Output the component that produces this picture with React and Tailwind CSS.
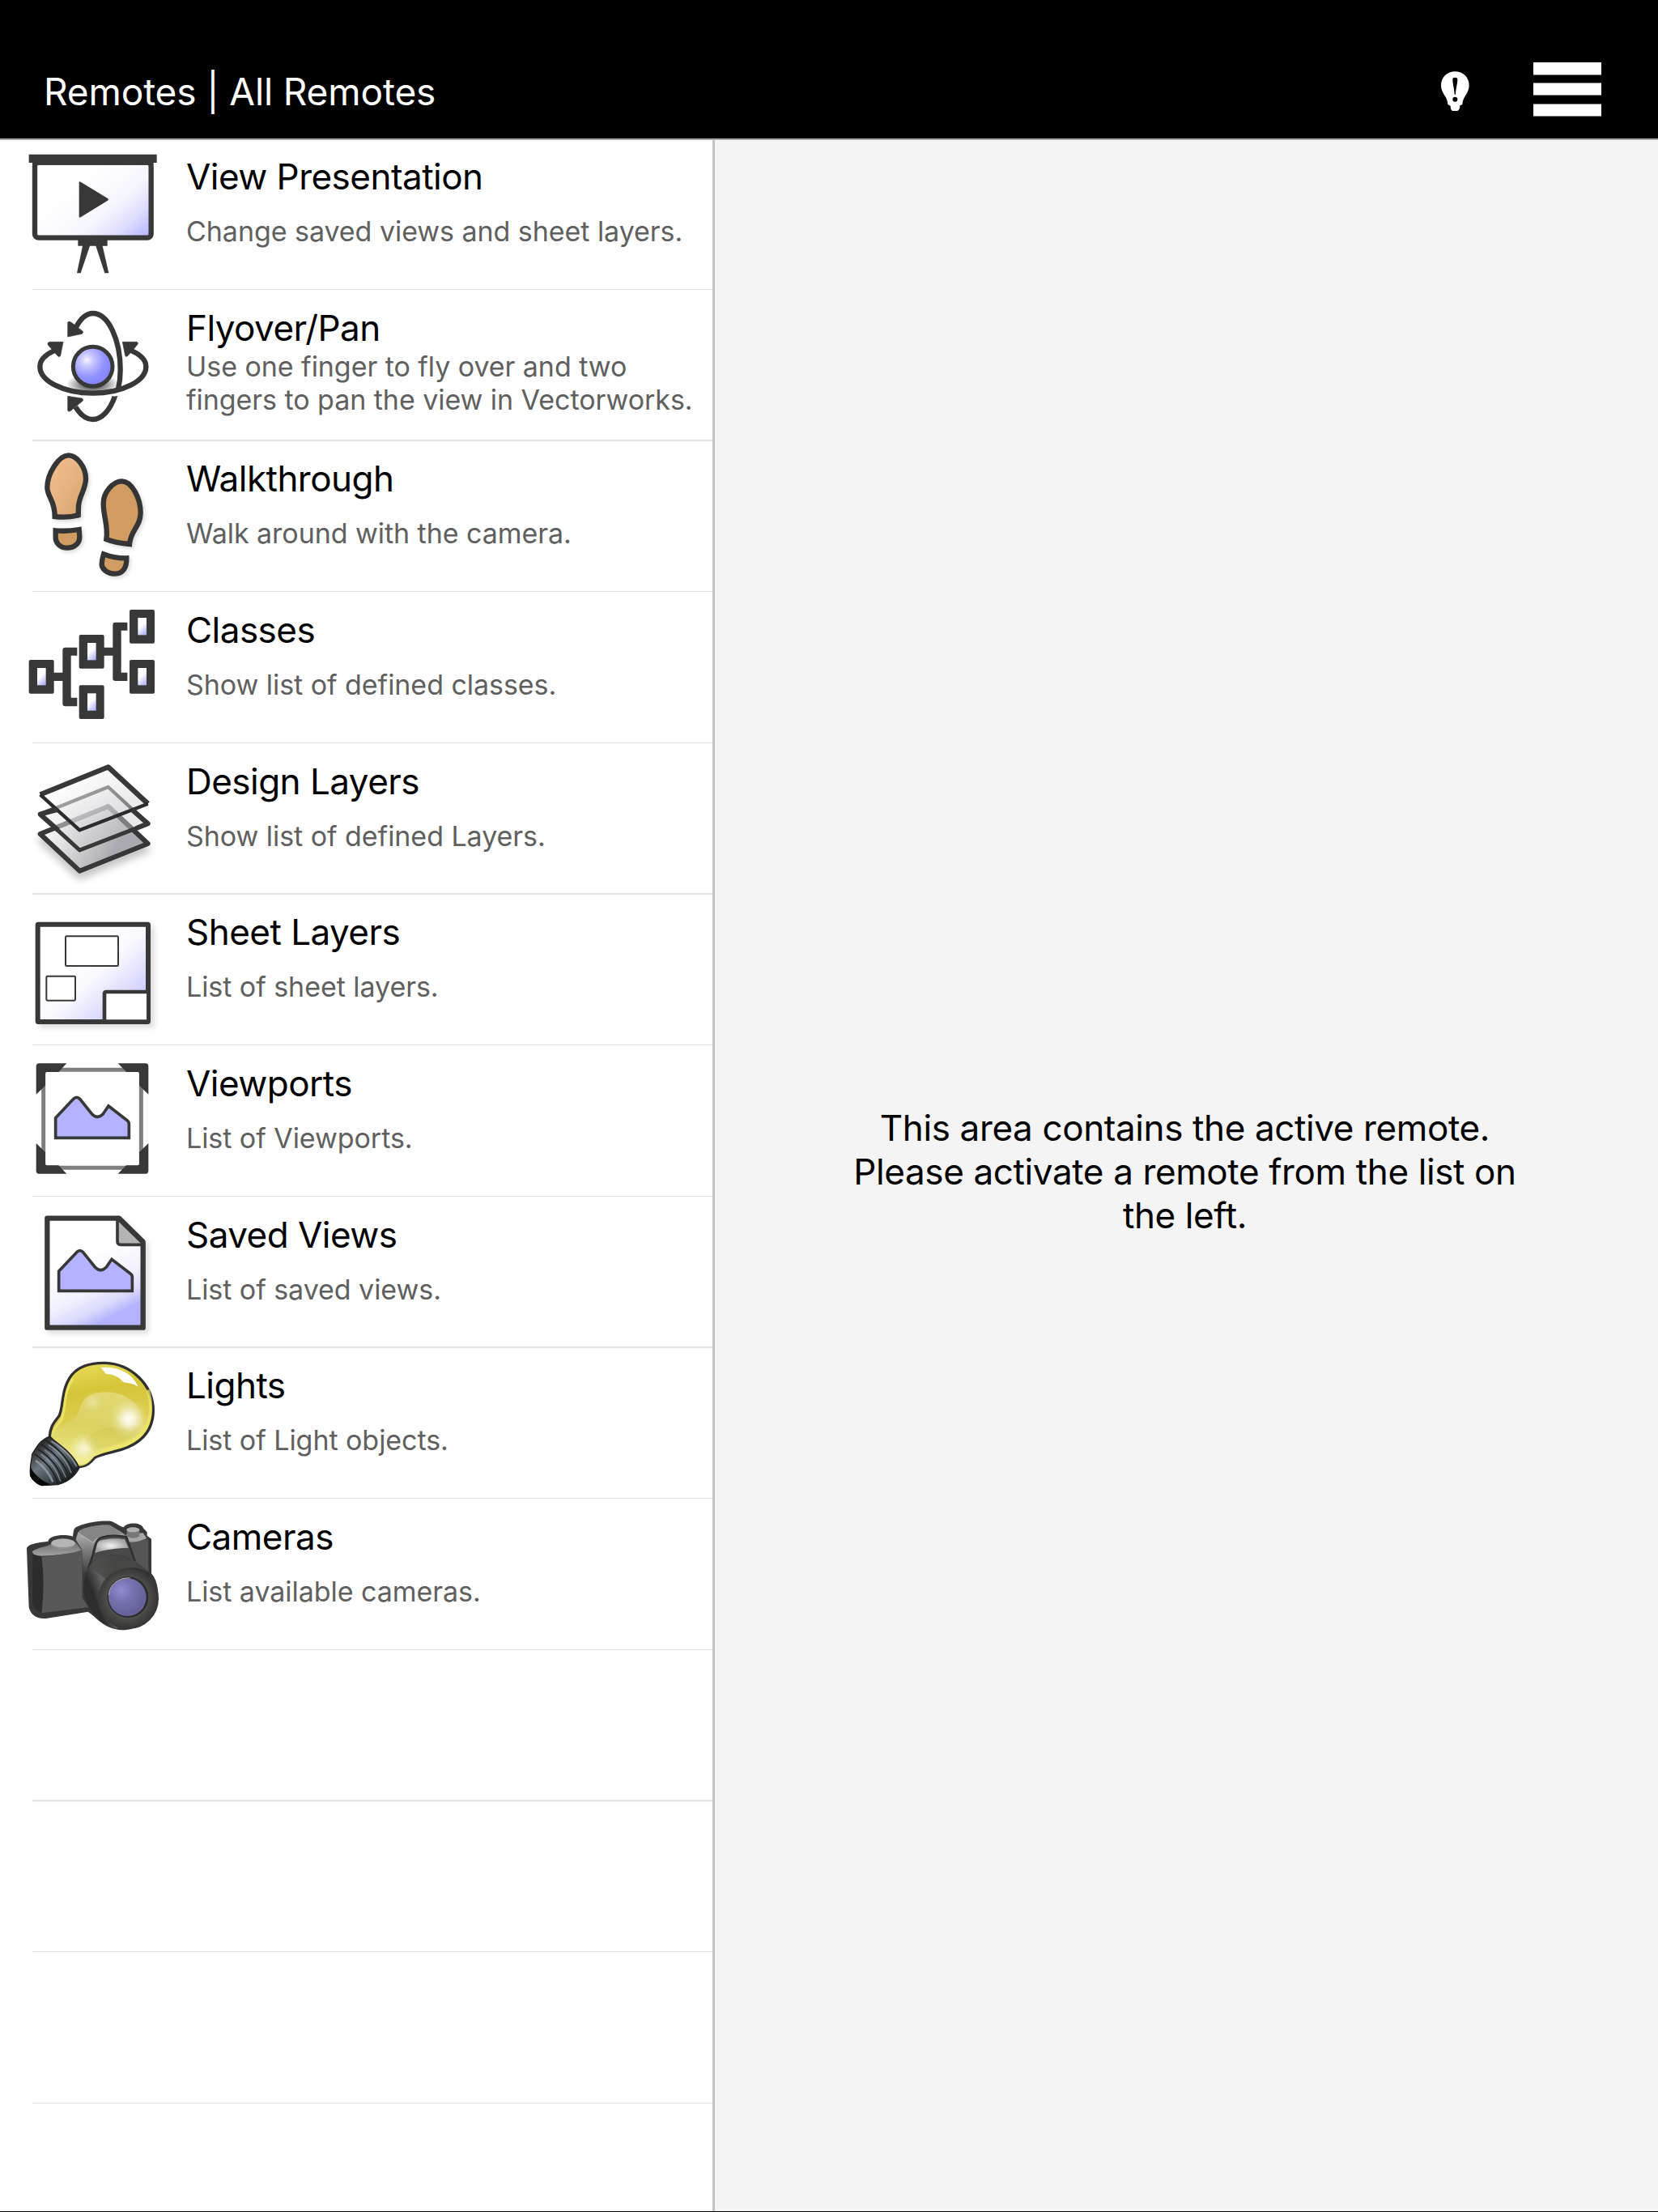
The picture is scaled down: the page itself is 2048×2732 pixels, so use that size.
import React from 'react';

const INK = '#383838';

function PresentationIcon() {
  return (
    <svg viewBox="0 39 660 549" className="w-[220px] h-[183px] shrink-0">
      <defs>
        <linearGradient id="screen" gradientUnits="userSpaceOnUse" x1="300" y1="190" x2="515" y2="440">
          <stop offset="0" stopColor="#fff" />
          <stop offset="0.45" stopColor="#f6f6ff" />
          <stop offset="0.7" stopColor="#dedeff" />
          <stop offset="1" stopColor="#b0b0ff" />
        </linearGradient>
      </defs>
      <rect x="129" y="122" width="431" height="279" rx="14" fill="url(#screen)" stroke={INK} strokeWidth="19" />
      <path d="M107 92H581V123H569V131H120V123H107Z" fill={INK} />
      <path d="M293 197Q293 190 299 194L399 255Q404 259 399 263L299 325Q293 328 293 321Z" fill={INK} />
      <path d="M289 408H398V431H380L403 532H388L355 431H333L299 532H285L306 431H289Z" fill={INK} />
    </svg>
  );
}

function FlyoverIcon() {
  return (
    <svg viewBox="0 594 660 549" className="w-[220px] h-[183px] shrink-0">
      <defs>
        <radialGradient id="ball" gradientUnits="userSpaceOnUse" cx="322" cy="854" r="92">
          <stop offset="0" stopColor="#f6f6ff" />
          <stop offset="0.25" stopColor="#c8c8ff" />
          <stop offset="0.7" stopColor="#9292ff" />
          <stop offset="1" stopColor="#8686ff" />
        </radialGradient>
        <radialGradient id="ballShade">
          <stop offset="0" stopColor="#000" stopOpacity="0.9" />
          <stop offset="0.6" stopColor="#000" stopOpacity="0.35" />
          <stop offset="1" stopColor="#000" stopOpacity="0" />
        </radialGradient>
      </defs>
      <ellipse cx="343" cy="945" rx="98" ry="42" fill="url(#ballShade)" />
      <g fill="none" stroke={INK} strokeWidth="19">
        <path d="M425 990C405 1046 374 1074 344 1074C319 1074 297 1056 280 1028" />
        <path d="M282 732C297 704 319 681 344 681C402 681 446 780 446 890C446 918 443 940 438 962" />
        <path d="M204 818C168 834 148 856 148 878C148 932 236 977 344 977C452 977 541 932 541 878C541 856 521 834 484 818" />
      </g>
      <g fill={INK} stroke={INK} strokeWidth="2" strokeLinejoin="round">
        <path d="M251 768V718Q251 709 259 712Q272 720 282 728Q294 738 305 746Q311 751 304 757Z" />
        <path d="M234 787L224 838Q221 845 214 839L178 798Q174 791 183 787Z" />
        <path d="M454 787H507Q514 790 509 797L474 838Q466 845 464 837Z" />
        <path d="M251 988L303 996Q312 1000 306 1006L262 1042Q252 1048 251 1039Z" />
        <path d="M417 991L436 986L426 1010L410 1010Z" stroke="none" />
      </g>
      <circle cx="344" cy="878" r="73" fill="url(#ball)" stroke={INK} strokeWidth="15" />
    </svg>
  );
}

function WalkthroughIcon() {
  return (
    <svg viewBox="0 15 660 549" className="w-[220px] h-[183px] shrink-0">
      <defs>
        <linearGradient id="sole" x1="0" y1="0" x2="1" y2="1">
          <stop offset="0" stopColor="#f0bd8d" />
          <stop offset="0.45" stopColor="#e9b583" />
          <stop offset="1" stopColor="#d3a067" />
        </linearGradient>
        <filter id="soleShadow" x="-20%" y="-20%" width="150%" height="150%">
          <feDropShadow dx="7" dy="8" stdDeviation="6" floodOpacity="0.13" />
        </filter>
      </defs>
      <g stroke="#343434" strokeWidth="19" filter="url(#soleShadow)">
        <path d="M254 67C284 67 318 110 318 154C318 193 293 217 291 256L290 289Q248 300 203 294C203 264 197 246 188 228C180 212 175 201 175 186C175 135 218 67 254 67Z" fill="url(#sole)" />
        <path d="M206 346Q250 350 293 342L295 368C296 394 275 410 249 410C224 410 206 394 206 370Z" fill="#d09c62" />
        <path d="M452 163C488 163 521 226 521 280C521 331 483 346 480 396Q430 392 394 378C402 330 383 295 383 245C383 204 419 163 452 163Z" fill="#d09c62" />
        <path d="M384 433Q425 449 469 448C470 482 456 506 427 506C396 506 376 486 377 470Q378 452 384 433Z" fill="#d09c62" />
      </g>
    </svg>
  );
}

const CLASS_BOXES = [[107, 826], [293, 733], [293, 920], [480, 640], [480, 826]];

function ClassesIcon() {
  return (
    <svg viewBox="0 574 660 549" className="w-[220px] h-[183px] shrink-0">
      <defs>
        <linearGradient id="cell" x1="0.2" y1="0" x2="0.7" y2="1">
          <stop offset="0.45" stopColor="#fff" />
          <stop offset="1" stopColor="#b4b4fb" />
        </linearGradient>
      </defs>
      {CLASS_BOXES.map(([x, y]) => (
        <g key={`${x}-${y}`}>
          <rect x={x} y={y} width="93" height="125" rx="6" fill={INK} />
          <rect x={x + 31} y={y + 30} width="32" height="64" fill="url(#cell)" />
        </g>
      ))}
      <path d="M198 873H232V789Q232 780 241 780H286V810H263V966H286V998H241Q232 998 232 989V904H198Z" fill={INK} />
      <path d="M384 780H418V696Q418 687 427 687H472V717H449V873H472V904H427Q418 904 418 895V810H384Z" fill={INK} />
    </svg>
  );
}

function DesignLayersIcon() {
  return (
    <svg viewBox="0 -6 660 549" className="w-[220px] h-[183px] shrink-0">
      <defs>
        <linearGradient id="sheet" gradientUnits="userSpaceOnUse" x1="270" y1="110" x2="400" y2="310">
          <stop offset="0" stopColor="#fff" stopOpacity="0.6" />
          <stop offset="1" stopColor="#cfcfd4" stopOpacity="0.45" />
        </linearGradient>
        <linearGradient id="sheetBottom" gradientUnits="userSpaceOnUse" x1="210" y1="280" x2="420" y2="400">
          <stop offset="0" stopColor="#f4f4f4" />
          <stop offset="1" stopColor="#aaaab0" />
        </linearGradient>
        <filter id="layerShadow" x="-20%" y="-20%" width="150%" height="160%">
          <feDropShadow dx="0" dy="24" stdDeviation="15" floodOpacity="0.22" />
        </filter>
      </defs>
      <g stroke={INK} strokeLinejoin="round">
        <path d="M401 228L548 366L295 467L149 330Z" fill="url(#sheetBottom)" strokeWidth="18" filter="url(#layerShadow)" />
        <path d="M401 156L548 292L295 390L149 257Z" fill="url(#sheet)" stroke="none" />
        <path d="M205 235L401 156L492 240" fill="none" strokeWidth="13" />
        <path d="M205 235L149 257L295 390L548 292L492 240" fill="none" strokeWidth="15" />
        <path d="M401 82L548 218L295 316L149 184Z" fill="url(#sheet)" stroke="none" />
        <path d="M149 184L401 82L548 218" fill="none" strokeWidth="19" />
        <path d="M149 184L295 316L548 218" fill="none" strokeWidth="13" stroke="#2c2c2e" />
        <path d="M212 240L149 257L215 316M490 241L548 292L505 309" fill="none" strokeWidth="18" />
      </g>
    </svg>
  );
}

function SheetLayersIcon() {
  return (
    <svg viewBox="0 555 660 549" className="w-[220px] h-[183px] shrink-0">
      <defs>
        <linearGradient id="plan" gradientUnits="userSpaceOnUse" x1="270" y1="770" x2="480" y2="1000">
          <stop offset="0" stopColor="#fff" />
          <stop offset="0.4" stopColor="#f8f8ff" />
          <stop offset="1" stopColor="#c8c8ff" />
        </linearGradient>
        <filter id="planShadow" x="-10%" y="-10%" width="130%" height="130%">
          <feDropShadow dx="14" dy="14" stdDeviation="9" floodOpacity="0.13" />
        </filter>
      </defs>
      <rect x="140" y="665" width="409" height="361" rx="2" fill="url(#plan)" stroke={INK} strokeWidth="18" strokeLinejoin="round" filter="url(#planShadow)" />
      <path d="M387 1020V922Q387 915 394 915H543V1018H387" fill="#fff" />
      <path d="M387 1022V922Q387 915 394 915H545" fill="none" stroke={INK} strokeWidth="14" />
      <rect x="243" y="709" width="195" height="110" rx="4" fill="#fff" stroke={INK} strokeWidth="6" />
      <rect x="172" y="857" width="107" height="90" rx="4" fill="#fff" stroke={INK} strokeWidth="6" />
    </svg>
  );
}

function ViewportsIcon() {
  return (
    <svg viewBox="0 2 660 549" className="w-[220px] h-[183px] shrink-0">
      <rect x="161" y="93" width="362" height="363" rx="6" fill="#fff" stroke="#808080" strokeWidth="15" />
      <g fill={INK}>
        <path d="M145 69H247L217 101H174Q168 101 168 107V151L134 184V80Q134 69 145 69Z" />
        <path d="M437 69H539Q550 69 550 80V184L516 151V107Q516 101 510 101H468Z" />
        <path d="M134 365L168 398V441Q168 447 174 447H217L247 478H145Q134 478 134 467Z" />
        <path d="M550 365L516 398V441Q516 447 510 447H468L437 478H539Q550 478 550 467Z" />
      </g>
      <path d="M206 345V271L272 201Q284 189 296 201L340 256Q361 278 382 256L402 227L471 280Q478 285 478 294V345Z" fill="#b3b3ff" stroke={INK} strokeWidth="11" />
    </svg>
  );
}

function SavedViewsIcon() {
  return (
    <svg viewBox="0 563 660 549" className="w-[220px] h-[183px] shrink-0">
      <defs>
        <linearGradient id="page" gradientUnits="userSpaceOnUse" x1="320" y1="780" x2="430" y2="1000">
          <stop offset="0" stopColor="#fff" />
          <stop offset="0.5" stopColor="#f2f2ff" />
          <stop offset="0.8" stopColor="#d9d9ff" />
          <stop offset="1" stopColor="#b3b3ff" />
        </linearGradient>
        <filter id="pageShadow" x="-10%" y="-10%" width="130%" height="130%">
          <feDropShadow dx="12" dy="13" stdDeviation="9" floodOpacity="0.13" />
        </filter>
      </defs>
      <path d="M175 643H441L530 731V1048H175Z" fill="url(#page)" stroke={INK} strokeWidth="19" strokeLinejoin="round" filter="url(#pageShadow)" />
      <path d="M435 650V728Q435 741 448 741H525Z" fill="#b3b3b3" />
      <path d="M435 648V728Q435 741 448 741H525" fill="none" stroke={INK} strokeWidth="11" />
      <path d="M441 643L530 731" stroke={INK} strokeWidth="19" />
      <path d="M218 912V839L284 769Q296 757 308 769L352 824Q373 846 394 824L414 795L483 848Q490 853 490 861V912Z" fill="#b3b3ff" stroke={INK} strokeWidth="11" />
    </svg>
  );
}

function LightsIcon() {
  return (
    <svg viewBox="0 15 660 549" className="w-[220px] h-[183px] shrink-0">
      <defs>
        <linearGradient id="glass" gradientUnits="userSpaceOnUse" x1="330" y1="70" x2="390" y2="430">
          <stop offset="0" stopColor="#e6db55" />
          <stop offset="0.28" stopColor="#d6c438" />
          <stop offset="0.65" stopColor="#ddd054" />
          <stop offset="1" stopColor="#efe97a" />
        </linearGradient>
        <linearGradient id="innerGlass" gradientUnits="userSpaceOnUse" x1="370" y1="180" x2="340" y2="440">
          <stop offset="0" stopColor="#e6de84" stopOpacity="0.75" />
          <stop offset="0.5" stopColor="#dbd164" stopOpacity="0.8" />
          <stop offset="1" stopColor="#f1ec8c" stopOpacity="0.9" />
        </linearGradient>
        <linearGradient id="cap" gradientUnits="userSpaceOnUse" x1="150" y1="370" x2="250" y2="500">
          <stop offset="0" stopColor="#2a2d2e" />
          <stop offset="0.4" stopColor="#6c777f" />
          <stop offset="0.65" stopColor="#4c575e" />
          <stop offset="1" stopColor="#1c2022" />
        </linearGradient>
        <radialGradient id="glow">
          <stop offset="0" stopColor="#fff" stopOpacity="0.95" />
          <stop offset="0.3" stopColor="#fff" stopOpacity="0.7" />
          <stop offset="0.65" stopColor="#fff" stopOpacity="0.22" />
          <stop offset="1" stopColor="#fff" stopOpacity="0" />
        </radialGradient>
      </defs>
      <path d="M184 345C186 305 200 291 218 268C237 234 223 171 266 114C299 75 350 69 390 70C485 73 567 150 568 245C568 310 535 355 475 382C432 402 384 401 350 422C335 440 320 454 290 455Z" fill="url(#glass)" stroke="#303030" strokeWidth="10" />
      <path d="M194 342C197 316 212 302 227 280C246 240 233 180 270 128" fill="none" stroke="#eee870" strokeWidth="9" opacity="0.8" />
      <path d="M548 170C568 235 558 298 520 337C475 382 390 388 345 412C328 436 314 447 290 447" fill="none" stroke="#efe866" strokeWidth="12" opacity="0.7" />
      <path d="M190 340C220 290 278 302 296 240C310 192 345 178 396 178C465 180 526 220 527 290C524 350 462 366 400 386C340 404 345 442 290 446Z" fill="url(#innerGlass)" />
      <path d="M315 360C345 315 400 302 450 312C490 308 510 305 520 298C500 365 410 372 345 398Z" fill="#c6ba3c" opacity="0.25" />
      <circle cx="478" cy="278" r="74" fill="url(#glow)" />
      <circle cx="310" cy="386" r="56" fill="url(#glow)" opacity="0.7" />
      <circle cx="343" cy="215" r="42" fill="url(#glow)" opacity="0.3" />
      <path d="M374 87C435 80 492 108 512 158C490 143 476 146 456 140C440 118 415 112 392 110Z" fill="#fff" />
      <path d="M182 343C150 355 137 378 119 408C119 425 108 450 113 488C125 506 140 522 155 524L214 521C246 512 276 495 294 458C270 405 224 375 182 343Z" fill="url(#cap)" stroke="#222" strokeWidth="4" />
      <path d="M112 450C118 475 148 505 190 521L155 524C138 520 112 500 112 486Z" fill="#080808" />
      <g fill="none">
        <g stroke="#1d2021" strokeWidth="5">
          <path d="M168 356C215 385 252 421 276 478" />
          <path d="M152 372C200 400 238 445 258 494" />
          <path d="M140 389C184 415 220 460 236 510" />
          <path d="M128 408C170 435 203 475 215 518" />
        </g>
        <g stroke="#9aa5ab" strokeWidth="4" opacity="0.75">
          <path d="M180 374C222 400 248 436 264 478" />
          <path d="M166 392C206 421 230 458 244 494" />
          <path d="M152 408C190 437 214 475 224 508" />
          <path d="M132 432C160 450 186 485 196 511" strokeWidth="8" />
          <path d="M190 360C236 388 268 420 284 454" strokeWidth="6" />
        </g>
      </g>
    </svg>
  );
}

function CamerasIcon() {
  return (
    <svg viewBox="0 573 660 549" className="w-[220px] h-[183px] shrink-0">
      <defs>
        <linearGradient id="bodyTop" x1="0" y1="0" x2="0" y2="1">
          <stop offset="0" stopColor="#6c6c6c" />
          <stop offset="1" stopColor="#a2a2a2" />
        </linearGradient>
        <linearGradient id="prism" gradientUnits="userSpaceOnUse" x1="350" y1="670" x2="340" y2="850">
          <stop offset="0" stopColor="#777" />
          <stop offset="0.25" stopColor="#a5a5a5" />
          <stop offset="0.6" stopColor="#747474" />
          <stop offset="1" stopColor="#404040" />
        </linearGradient>
        <radialGradient id="flash" cx="0.46" cy="0.5" r="0.5">
          <stop offset="0" stopColor="#f2f2f2" />
          <stop offset="1" stopColor="#a3a3a3" />
        </radialGradient>
        <linearGradient id="barrel" gradientUnits="userSpaceOnUse" x1="320" y1="860" x2="450" y2="810">
          <stop offset="0" stopColor="#2d2d2d" />
          <stop offset="0.35" stopColor="#626262" />
          <stop offset="0.7" stopColor="#424242" />
          <stop offset="1" stopColor="#333" />
        </linearGradient>
        <radialGradient id="rim" gradientUnits="userSpaceOnUse" cx="472" cy="940" r="118">
          <stop offset="0.6" stopColor="#52534f" />
          <stop offset="0.8" stopColor="#41423f" />
          <stop offset="1" stopColor="#343434" />
        </radialGradient>
        <radialGradient id="lens" gradientUnits="userSpaceOnUse" cx="450" cy="912" r="92">
          <stop offset="0" stopColor="#908bcf" />
          <stop offset="0.5" stopColor="#7470ad" />
          <stop offset="1" stopColor="#65629a" />
        </radialGradient>
      </defs>
      <path d="M99 757C105 738 150 735 178 731C184 704 250 705 270 713C273 687 273 680 290 675C330 657 385 654 411 656C428 661 440 674 459 679C465 662 522 656 532 683L545 697V710L561 722V850C588 880 590 935 583 965C565 1040 480 1069 430 1057C380 1048 355 1010 326 992L170 1017C135 1020 112 1000 107 975Z" fill={INK} />
      <path d="M121 781L154 788C164 850 161 940 154 993C132 990 122 972 120 960Z" fill="#2c2c2c" />
      <path d="M154 788C210 785 255 776 305 765V940L328 975L154 997C163 930 163 850 154 788Z" fill="#585858" />
      <path d="M119 768C145 750 175 752 190 740L280 733L303 764C250 779 190 784 155 785C135 785 121 779 119 768Z" fill="url(#bodyTop)" />
      <ellipse cx="234" cy="741" rx="45" ry="19" fill="#8f8f8f" />
      <ellipse cx="234" cy="737" rx="44" ry="16" fill="#b5b5b5" />
      <path d="M281 725C288 700 288 691 305 686C345 672 385 668 409 671L455 700L468 712C420 710 380 712 363 722C345 745 342 790 325 840L308 850L304 762Z" fill="url(#prism)" />
      <path d="M288 699L345 736C355 711 405 705 453 706L408 672C370 668 325 677 304 686Z" fill="#858585" />
      <path d="M288 699L345 736C355 711 405 705 453 706" fill="none" stroke="#b8b8b8" strokeWidth="3" />
      <path d="M478 733L550 724V850C535 835 518 825 503 808Z" fill="#555" />
      <path d="M467 704L530 700L544 720C520 731 492 735 477 733Z" fill="#a6a6a6" />
      <path d="M470 687H517V712Q493 728 470 712Z" fill="#777" />
      <ellipse cx="493" cy="688" rx="24" ry="9" fill="#b2b2b2" />
      <path d="M345 778C350 745 360 720 377 716C410 706 445 709 469 715L502 810C450 775 385 775 330 822Z" fill="#494949" stroke="#2f2f2f" strokeWidth="7" />
      <path d="M352 774L361 737Q366 727 382 725C415 719 445 720 462 724L476 755C435 757 390 760 352 774Z" fill="url(#flash)" />
      <path d="M330 824C355 789 410 775 450 785C495 795 535 825 561 855L430 1057C380 1045 325 990 311 925C307 885 316 850 330 824Z" fill="url(#barrel)" />
      <path d="M330 824C355 789 410 775 450 785C495 795 530 820 545 843C490 815 430 830 397 873Z" fill="#4a4a48" opacity="0.8" />
      <circle cx="476" cy="944" r="112" fill="url(#rim)" />
      <ellipse cx="474" cy="938" rx="76" ry="76" fill="#2c2c2c" />
      <ellipse cx="472" cy="938" rx="70" ry="70" fill="url(#lens)" />
      <path d="M403 930C406 890 440 864 482 867" fill="none" stroke="#bcbcbc" strokeWidth="3" />
    </svg>
  );
}

// rows are 186 2/3 px high, so heights and separators repeat every three rows
const remotes = [
  { title: 'View Presentation', text: 'Change saved views and sheet layers.', Icon: PresentationIcon, row: 'h-[185px]', pad: 'pt-[18px]' },
  { title: 'Flyover/Pan', text: 'Use one finger to fly over and two fingers to pan the view in Vectorworks.', Icon: FlyoverIcon, row: 'h-[187px]', pad: 'pt-5', thick: true },
  { title: 'Walkthrough', text: 'Walk around with the camera.', Icon: WalkthroughIcon, row: 'h-[186px]', pad: 'pt-[19px]' },
  { title: 'Classes', text: 'Show list of defined classes.', Icon: ClassesIcon, row: 'h-[187px]', pad: 'pt-5' },
  { title: 'Design Layers', text: 'Show list of defined Layers.', Icon: DesignLayersIcon, row: 'h-[187px]', pad: 'pt-5', thick: true },
  { title: 'Sheet Layers', text: 'List of sheet layers.', Icon: SheetLayersIcon, row: 'h-[186px]', pad: 'pt-[19px]' },
  { title: 'Viewports', text: 'List of Viewports.', Icon: ViewportsIcon, row: 'h-[187px]', pad: 'pt-5' },
  { title: 'Saved Views', text: 'List of saved views.', Icon: SavedViewsIcon, row: 'h-[187px]', pad: 'pt-5', thick: true },
  { title: 'Lights', text: 'List of Light objects.', Icon: LightsIcon, row: 'h-[186px]', pad: 'pt-[19px]' },
  { title: 'Cameras', text: 'List available cameras.', Icon: CamerasIcon, row: 'h-[187px]', pad: 'pt-5' },
];

const emptyRows = [
  { row: 'h-[187px]', thick: true },
  { row: 'h-[186px]' },
  { row: 'h-[187px]' },
];

function Separator({ thick }) {
  return <div className={`ml-10 shrink-0 bg-[#e2e2e2] ${thick ? 'h-0.5' : 'h-px'}`} />;
}

function RemoteRow({ title, text, Icon, row, pad, thick }) {
  return (
    <li className={`flex flex-col ${row}`}>
      <div className="flex-1 min-h-0 flex items-start">
        <Icon />
        <div className={`pl-2.5 ${pad}`}>
          <h2 className="text-[44px] leading-[54px] tracking-[-0.53px] text-black">{title}</h2>
          <div className="min-h-[80px] w-[640px] flex items-center">
            <p className="text-[34px] leading-[41px] tracking-[-0.05px] text-[#606060]">{text}</p>
          </div>
        </div>
      </div>
      <Separator thick={thick} />
    </li>
  );
}

function Header() {
  return (
    <header className="h-[173px] shrink-0 bg-black border-b-2 border-[#aaa] flex items-start pl-[54px] pr-[70px]">
      <h1 className="mt-[85px] text-[46px] leading-[56px] tracking-[-0.12px] text-white">Remotes | All Remotes</h1>
      <button className="ml-auto mt-[88px]" title="Tips">
        <svg viewBox="120 113 105 147" className="w-[35px] h-[49px]">
          <path d="M172 114C201 114 224 136 224 165C224 190 208 203 202 220Q199 228 199 236L190 240C190 252 186 260 179 260H165C158 260 155 252 155 241L145 236Q145 226 141 217C134 201 120 188 120 165C120 136 143 114 172 114Z" fill="#fff" />
          <path d="M163 143Q163 136 172 136Q181 136 181 143C181 160 175 175 174 199H170C169 175 163 160 163 143Z" fill="#000" />
          <circle cx="172" cy="217" r="9" fill="#000" />
        </svg>
      </button>
      <button className="ml-[79px] mt-[77px]" title="Menu">
        <svg viewBox="0 0 84 67" className="w-[84px] h-[67px]" fill="#fff">
          <rect width="84" height="15.5" />
          <rect y="25.5" width="84" height="15" />
          <rect y="51.5" width="84" height="15" />
        </svg>
      </button>
    </header>
  );
}

export default function App() {
  return (
    <div className="w-[2048px] h-[2732px] flex flex-col overflow-hidden bg-white border-b border-black font-['Inter',sans-serif] antialiased">
      <Header />
      <main className="flex-1 min-h-0 flex">
        <ul className="w-[880px] shrink-0 bg-white">
          {remotes.map((remote) => (
            <RemoteRow key={remote.title} {...remote} />
          ))}
          {emptyRows.map(({ row, thick }, i) => (
            <li key={i} className={`flex flex-col justify-end ${row}`}>
              <Separator thick={thick} />
            </li>
          ))}
        </ul>
        <section className="flex-1 flex items-center justify-center pb-2.5 pr-1 bg-[#f4f4f4] border-l-[3px] border-[#c4c4c6]">
          <p className="w-[840px] text-center text-[44px] leading-[54px] tracking-[-0.38px] text-black">
            This area contains the active remote. Please activate a remote from the list on the left.
          </p>
        </section>
      </main>
    </div>
  );
}
